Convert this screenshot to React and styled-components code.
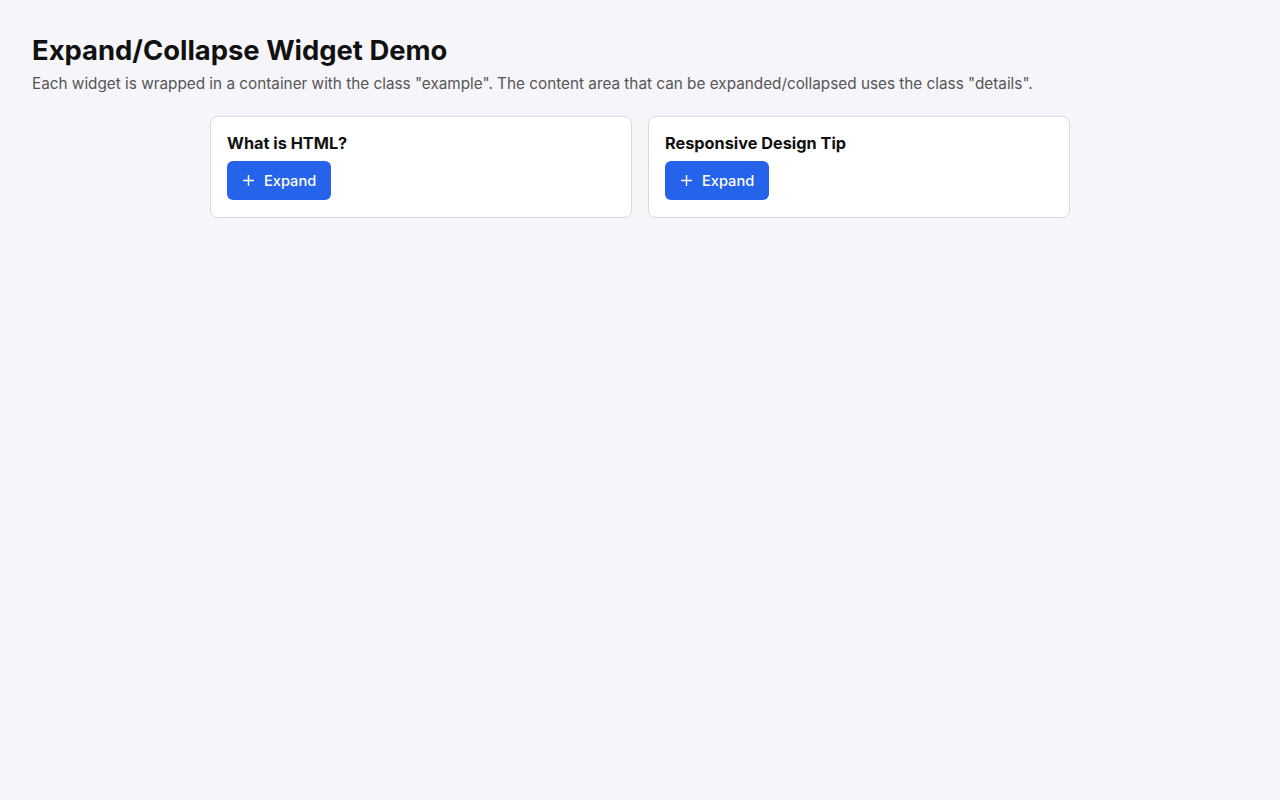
import React from "react";
import styled, { createGlobalStyle } from "styled-components";

const Global = createGlobalStyle`
  html, body { margin: 0; padding: 0; }
  body {
    background: #f6f6fa;
    font-family: Inter, "Noto Sans", sans-serif;
    color: #111;
  }
`;

const Page = styled.main`
  padding: 32px;
`;

const Title = styled.h1`
  margin: 0;
  font-size: 27.4px;
  line-height: 36px;
  font-weight: 700;
  color: #111;
`;

const Subtitle = styled.p`
  margin: 4px 0 20px;
  font-size: 15.3px;
  line-height: 24px;
  color: #555;
`;

const Row = styled.div`
  display: grid;
  grid-template-columns: 1fr 1fr;
  gap: 16px;
  max-width: 860px;
  margin: 0 auto;
  align-items: start;
`;

const Card = styled.section`
  background: #fff;
  border: 1px solid #d9d9e1;
  border-radius: 8px;
  padding: 15px 16px 17px;
`;

const CardTitle = styled.h2`
  margin: 0 0 6px;
  font-size: 16.3px;
  line-height: 23px;
  font-weight: 700;
  color: #111;
`;

const Button = styled.button`
  display: inline-flex;
  align-items: center;
  gap: 10px;
  height: 39px;
  padding: 0 15px 0 16px;
  border: none;
  border-radius: 6px;
  background: #2563eb;
  color: #fff;
  font-family: inherit;
  font-size: 14.6px;
  font-weight: 500;
  cursor: pointer;
`;

const PlusIcon = () => (
  <svg width="11" height="11" viewBox="0 0 12 12" aria-hidden="true">
    <path d="M6 0.5v11M0.5 6h11" stroke="#fff" strokeWidth="1.6" strokeLinecap="round" />
  </svg>
);

const items = ["What is HTML?", "Responsive Design Tip"];

export default function App() {
  return (
    <Page>
      <Global />
      <Title>Expand/Collapse Widget Demo</Title>
      <Subtitle>
        Each widget is wrapped in a container with the class "example". The content area that can be expanded/collapsed uses the class "details".
      </Subtitle>
      <Row>
        {items.map((t) => (
          <Card key={t} className="example">
            <CardTitle>{t}</CardTitle>
            <Button>
              <PlusIcon />
              Expand
            </Button>
          </Card>
        ))}
      </Row>
    </Page>
  );
}
